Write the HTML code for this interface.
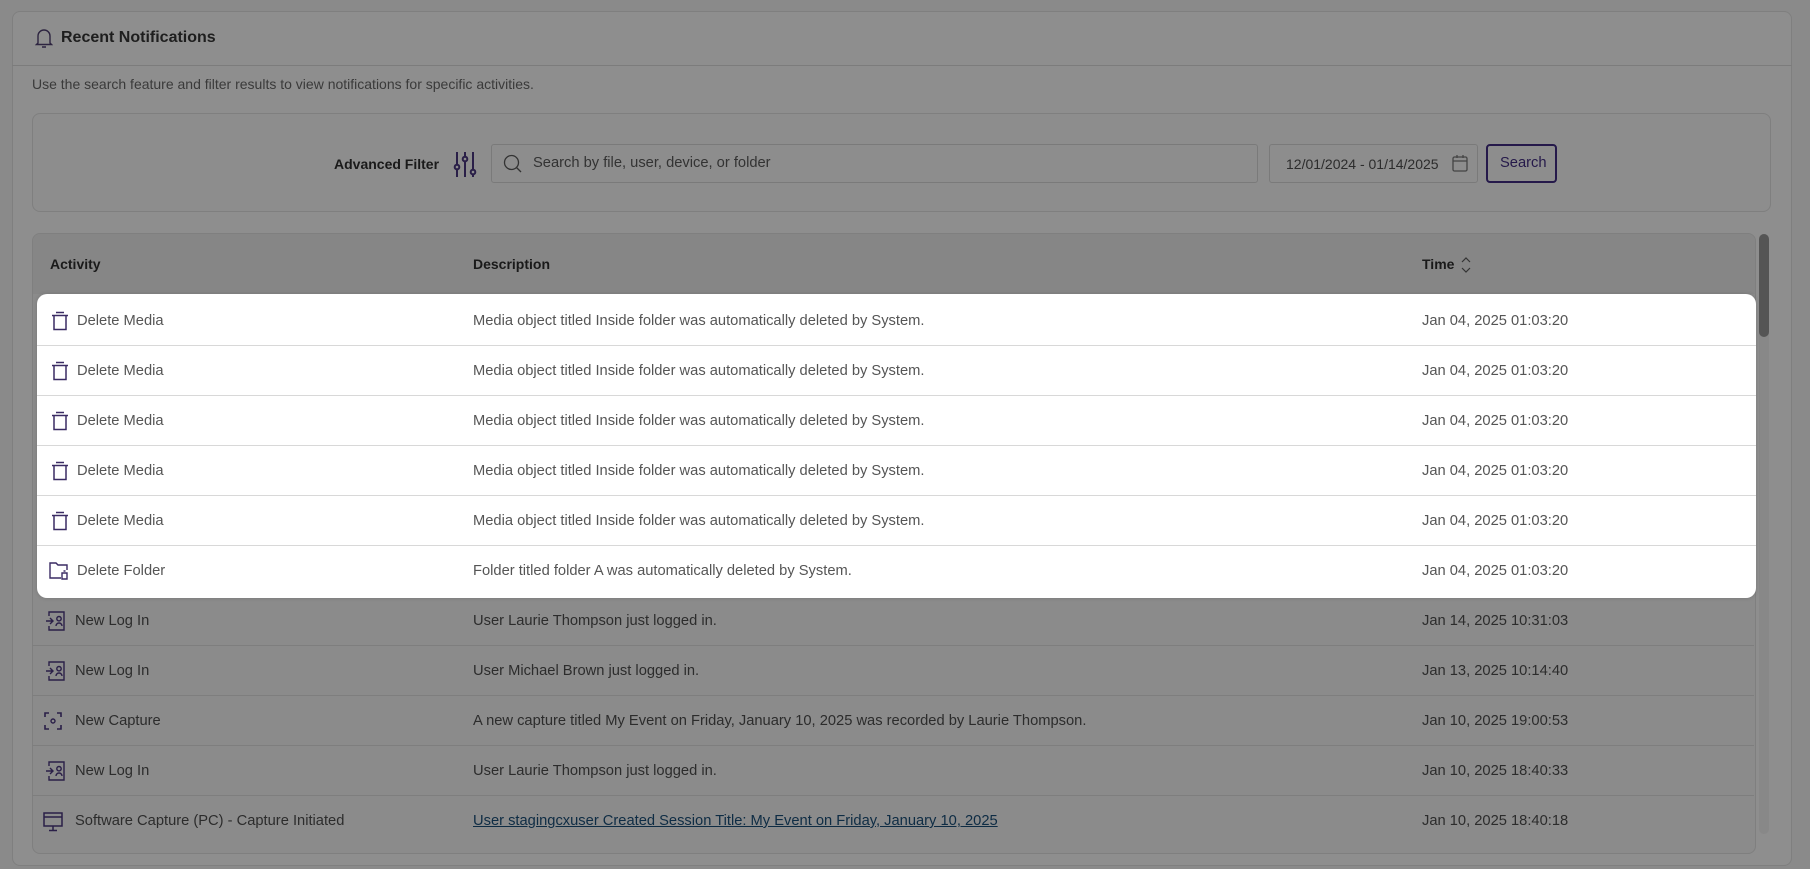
<!DOCTYPE html>
<html><head><meta charset="utf-8"><style>
*{box-sizing:border-box;margin:0;padding:0}
body{width:1810px;height:869px;background:#8a8a8a;font-family:"Liberation Sans",sans-serif;color:#262626;position:relative;overflow:hidden}
.abs{position:absolute}
.card{left:12px;top:11px;width:1780px;height:855px;background:#8e8e8e;border:1px solid #7f7f7f;border-radius:8px}
.t{font-size:14.7px;white-space:nowrap;position:absolute}
.row{position:absolute;left:32px;width:1722px;height:50px;border-bottom:1px solid #7e7e7e}
.row .t{top:50%;transform:translateY(-50%);color:#2c2c2c}
.wrow{border-bottom:1px solid #d8d8d8}
.wrow .t{color:#555}
svg{position:absolute}
</style></head><body>
<div class="abs card"></div>
<div class="abs" style="left:12px;top:65px;width:1780px;height:1px;background:#7c7c7c"></div>
<svg style="left:35px;top:27px" width="18" height="22" viewBox="0 0 18 22"><path d="M3 16V9a6 6 0 0 1 12 0v7l1.5 1.5h-15z M7 20h4" fill="none" stroke="#2d2440" stroke-width="1.4"/></svg>
<div class="t" style="left:61px;top:29px;font-size:16px;color:#1e1e1e;font-weight:600">Recent Notifications</div>
<div class="t" style="left:32px;top:76px;font-size:14px;color:#3a3a3a">Use the search feature and filter results to view notifications for specific activities.</div>
<div class="abs" style="left:32px;top:113px;width:1739px;height:99px;border:1px solid #7f7f7f;border-radius:8px;background:#8d8d8d"></div>
<div class="t" style="left:334px;top:156px;font-size:14px;font-weight:bold;color:#1a1a1a">Advanced Filter</div>
<svg style="left:453px;top:151px" width="24" height="27" viewBox="0 0 24 27"><g stroke="#2a1f48" stroke-width="2" fill="none"><path d="M4 1v25M12 1v25M20 1v25"/><circle cx="4" cy="16" r="2.3" fill="#8d8d8d"/><circle cx="12" cy="8" r="2.3" fill="#8d8d8d"/><circle cx="20" cy="21" r="2.3" fill="#8d8d8d"/></g></svg>
<div class="abs" style="left:491px;top:144px;width:767px;height:39px;border:1px solid #7a7a7a;border-radius:3px"></div>
<svg style="left:503px;top:154px" width="20" height="20" viewBox="0 0 20 20"><circle cx="8.5" cy="8.5" r="7" fill="none" stroke="#333" stroke-width="1.3"/><path d="M13.5 13.5L18 18" stroke="#333" stroke-width="1.3"/></svg>
<div class="t" style="left:533px;top:155px;color:#333">Search by file, user, device, or folder</div>
<div class="abs" style="left:1269px;top:144px;width:209px;height:39px;border:1px solid #7a7a7a;border-radius:3px"></div>
<div class="t" style="left:1286px;top:156px;font-size:14px;color:#2c2c2c">12/01/2024 - 01/14/2025</div>
<svg style="left:1452px;top:154px" width="16" height="18" viewBox="0 0 16 18"><g fill="none" stroke="#444" stroke-width="1.3"><rect x="1" y="3" width="14" height="14" rx="1.5"/><path d="M1 7h14M5 1v3M11 1v3"/></g></svg>
<div class="abs" style="left:1486px;top:144px;width:71px;height:39px;border:2px solid #25194a;border-radius:4px"></div>
<div class="t" style="left:1500px;top:155px;color:#25194a">Search</div>
<div class="abs" style="left:32px;top:233px;width:1724px;height:621px;border:1px solid #7f7f7f;border-radius:8px;background:#8b8b8b;overflow:hidden">
<div style="height:60px;background:#868686"></div></div>
<div class="t" style="left:50px;top:256px;font-size:14px;font-weight:bold;color:#1a1a1a">Activity</div>
<div class="t" style="left:473px;top:256px;font-size:14px;font-weight:bold;color:#1a1a1a">Description</div>
<div class="t" style="left:1422px;top:256px;font-size:14px;font-weight:bold;color:#1a1a1a">Time</div>
<svg style="left:1460px;top:256px" width="12" height="18" viewBox="0 0 12 18"><path d="M2 6l4-4 4 4M2 12l4 4 4-4" fill="none" stroke="#333" stroke-width="1.2"/></svg>
<div class="abs" style="left:1759px;top:234px;width:10px;height:600px;background:#888;border-radius:5px"></div>
<div class="abs" style="left:1759px;top:234px;width:10px;height:103px;background:#555;border-radius:5px"></div>

<div class="abs" style="left:37px;top:294px;width:1719px;height:304px;background:#fff;border-radius:10px;box-shadow:0 0 4px rgba(0,0,0,.15)"></div>

<div class="row wrow" style="top:296px;left:37px;width:1719px"><svg style="left:14px;top:15px" width="18" height="20" viewBox="0 0 18 20"><path d="M5 1.5h8M1 4.5h16M3 4.5v14h12v-14" fill="none" stroke="#3a2b63" stroke-width="1.5"/></svg><div class="t" style="left:40px">Delete Media</div><div class="t" style="left:436px">Media object titled Inside folder was automatically deleted by System.</div><div class="t" style="left:1385px">Jan 04, 2025 01:03:20</div></div>
<div class="row wrow" style="top:346px;left:37px;width:1719px"><svg style="left:14px;top:15px" width="18" height="20" viewBox="0 0 18 20"><path d="M5 1.5h8M1 4.5h16M3 4.5v14h12v-14" fill="none" stroke="#3a2b63" stroke-width="1.5"/></svg><div class="t" style="left:40px">Delete Media</div><div class="t" style="left:436px">Media object titled Inside folder was automatically deleted by System.</div><div class="t" style="left:1385px">Jan 04, 2025 01:03:20</div></div>
<div class="row wrow" style="top:396px;left:37px;width:1719px"><svg style="left:14px;top:15px" width="18" height="20" viewBox="0 0 18 20"><path d="M5 1.5h8M1 4.5h16M3 4.5v14h12v-14" fill="none" stroke="#3a2b63" stroke-width="1.5"/></svg><div class="t" style="left:40px">Delete Media</div><div class="t" style="left:436px">Media object titled Inside folder was automatically deleted by System.</div><div class="t" style="left:1385px">Jan 04, 2025 01:03:20</div></div>
<div class="row wrow" style="top:446px;left:37px;width:1719px"><svg style="left:14px;top:15px" width="18" height="20" viewBox="0 0 18 20"><path d="M5 1.5h8M1 4.5h16M3 4.5v14h12v-14" fill="none" stroke="#3a2b63" stroke-width="1.5"/></svg><div class="t" style="left:40px">Delete Media</div><div class="t" style="left:436px">Media object titled Inside folder was automatically deleted by System.</div><div class="t" style="left:1385px">Jan 04, 2025 01:03:20</div></div>
<div class="row wrow" style="top:496px;left:37px;width:1719px"><svg style="left:14px;top:15px" width="18" height="20" viewBox="0 0 18 20"><path d="M5 1.5h8M1 4.5h16M3 4.5v14h12v-14" fill="none" stroke="#3a2b63" stroke-width="1.5"/></svg><div class="t" style="left:40px">Delete Media</div><div class="t" style="left:436px">Media object titled Inside folder was automatically deleted by System.</div><div class="t" style="left:1385px">Jan 04, 2025 01:03:20</div></div>
<div class="row wrow" style="top:546px;left:37px;width:1719px;border-bottom:none"><svg style="left:12px;top:16px" width="20" height="18" viewBox="0 0 20 18"><path d="M12 16H1V1h6l2 2h9v5M13 11h5v6h-5zM14.5 9h2" fill="none" stroke="#3a2b63" stroke-width="1.4"/></svg><div class="t" style="left:40px">Delete Folder</div><div class="t" style="left:436px">Folder titled folder A was automatically deleted by System.</div><div class="t" style="left:1385px">Jan 04, 2025 01:03:20</div></div>

<div class="row" style="top:596px"><svg style="left:13px;top:15px" width="20" height="20" viewBox="0 0 20 20"><path d="M4 5V1h15v18H4v-4M1 10h7M5 7l3 3-3 3M11 15a3 3 0 0 1 6 0M14 5.5a2.2 2.2 0 1 0 0 4.4a2.2 2.2 0 1 0 0-4.4" fill="none" stroke="#2a1f48" stroke-width="1.4"/></svg><div class="t" style="left:43px">New Log In</div><div class="t" style="left:441px">User Laurie Thompson just logged in.</div><div class="t" style="left:1390px">Jan 14, 2025 10:31:03</div></div>
<div class="row" style="top:646px"><svg style="left:13px;top:15px" width="20" height="20" viewBox="0 0 20 20"><path d="M4 5V1h15v18H4v-4M1 10h7M5 7l3 3-3 3M11 15a3 3 0 0 1 6 0M14 5.5a2.2 2.2 0 1 0 0 4.4a2.2 2.2 0 1 0 0-4.4" fill="none" stroke="#2a1f48" stroke-width="1.4"/></svg><div class="t" style="left:43px">New Log In</div><div class="t" style="left:441px">User Michael Brown just logged in.</div><div class="t" style="left:1390px">Jan 13, 2025 10:14:40</div></div>
<div class="row" style="top:696px"><svg style="left:12px;top:16px" width="18" height="18" viewBox="0 0 18 18"><path d="M1 5V1h4M13 1h4v4M17 13v4h-4M5 17H1v-4" fill="none" stroke="#2a1f48" stroke-width="1.6"/><circle cx="9" cy="9" r="2" fill="none" stroke="#2a1f48" stroke-width="1.4"/></svg><div class="t" style="left:43px">New Capture</div><div class="t" style="left:441px">A new capture titled My Event on Friday, January 10, 2025 was recorded by Laurie Thompson.</div><div class="t" style="left:1390px">Jan 10, 2025 19:00:53</div></div>
<div class="row" style="top:746px"><svg style="left:13px;top:15px" width="20" height="20" viewBox="0 0 20 20"><path d="M4 5V1h15v18H4v-4M1 10h7M5 7l3 3-3 3M11 15a3 3 0 0 1 6 0M14 5.5a2.2 2.2 0 1 0 0 4.4a2.2 2.2 0 1 0 0-4.4" fill="none" stroke="#2a1f48" stroke-width="1.4"/></svg><div class="t" style="left:43px">New Log In</div><div class="t" style="left:441px">User Laurie Thompson just logged in.</div><div class="t" style="left:1390px">Jan 10, 2025 18:40:33</div></div>
<div class="row" style="top:796px;border-bottom:none"><svg style="left:11px;top:16px" width="20" height="20" viewBox="0 0 20 20"><path d="M1 1h18v13H1zM1 5h18M10 14v4M6 18.5h8" fill="none" stroke="#2a1f48" stroke-width="1.5"/></svg><div class="t" style="left:43px">Software Capture (PC) - Capture Initiated</div><div class="t" style="left:441px;color:#0e2c44;text-decoration:underline">User stagingcxuser Created Session Title: My Event on Friday, January 10, 2025</div><div class="t" style="left:1390px">Jan 10, 2025 18:40:18</div></div>
</body></html>
